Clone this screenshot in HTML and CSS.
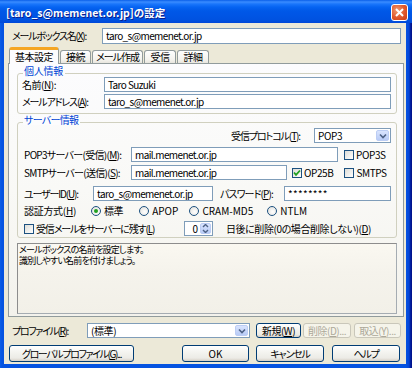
FILE: index.html
```html
<!DOCTYPE html>
<html lang="ja">
<head>
<meta charset="utf-8">
<title>設定</title>
<link rel="stylesheet" href="styles.css">
</head>
<body>
<div class="window">
  <div class="titlebar">
    <span class="title">[taro_s@memenet.or.jp]の設定</span>
    <span class="close"><svg width="15" height="15" viewBox="0 0 15 15"><path d="M4 4 L11 11 M11 4 L4 11" stroke="#fff" stroke-width="2"/></svg></span>
  </div>
  <div class="client">
    <div class="mailbox-row">
      <span class="lbl mailbox-lbl">メールボックス名(<u>X</u>):</span>
      <div class="field mailbox-field">taro_s@memenet.or.jp</div>
    </div>
    <div class="tabs">
      <div class="tab active">基本設定</div>
      <div class="tab t-conn">接続</div>
      <div class="tab t-mail">メール作成</div>
      <div class="tab t-recv">受信</div>
      <div class="tab t-adv">詳細</div>
    </div>
    <div class="panel">
      <div class="group personal">
        <span class="legend lg-personal">個人情報</span>
        <div class="frow"><span class="lbl lbl-personal lbl-name">名前(<u>N</u>):</span><div class="field f-personal">Taro Suzuki</div></div>
        <div class="frow gap2"><span class="lbl lbl-personal lbl-addr">メールアドレス(<u>A</u>):</span><div class="field f-personal">taro_s@memenet.or.jp</div></div>
      </div>
      <div class="group server">
        <span class="legend lg-server">サーバー情報</span>
        <div class="frow proto-row">
          <span class="lbl proto-lbl">受信プロトコル(<u>T</u>):</span>
          <div class="combo proto"><span class="combo-text">POP3</span><span class="drop"><svg width="8" height="6" viewBox="0 0 8 6"><path d="M1 1.5 L4 4.5 L7 1.5" fill="none" stroke="#4d6185" stroke-width="1.6"/></svg></span></div>
        </div>
        <div class="frow r-pop">
          <span class="lbl lbl-server">POP3サーバー(受信)(<u>M</u>):</span>
          <div class="field f-pop">mail.memenet.or.jp</div>
          <span class="check c-pop3s"><span class="box"></span>POP3S</span>
        </div>
        <div class="frow r-smtp">
          <span class="lbl lbl-server">SMTPサーバー(送信)(<u>S</u>):</span>
          <div class="field f-smtp">mail.memenet.or.jp</div>
          <span class="check c-op25b"><span class="box checked"><svg width="8" height="8" viewBox="0 0 8 8"><path d="M1 3.5 L3 5.8 L7 1.5" fill="none" stroke="#21a121" stroke-width="1.8"/></svg></span>OP25B</span>
          <span class="check c-smtps"><span class="box"></span>SMTPS</span>
        </div>
        <div class="frow r-user">
          <span class="lbl lbl-user">ユーザーID(<u>U</u>):</span>
          <div class="field f-user">taro_s@memenet.or.jp</div>
          <span class="lbl lbl-pass">パスワード(<u>P</u>):</span>
          <div class="field f-pass">********</div>
        </div>
        <div class="frow r-auth">
          <span class="lbl lbl-auth">認証方式(<u>H</u>)</span>
          <span class="radio rd-std"><span class="dot on"></span>標準</span>
          <span class="radio rd-apop"><span class="dot"></span>APOP</span>
          <span class="radio rd-cram"><span class="dot"></span>CRAM-MD5</span>
          <span class="radio rd-ntlm"><span class="dot"></span>NTLM</span>
        </div>
        <div class="frow r-keep">
          <span class="check c-keep"><span class="box"></span>受信メールをサーバーに残す(<u>L</u>)</span>
          <div class="spin"><span class="spin-val">0</span><span class="spin-btn"><svg width="9" height="13" viewBox="0 0 9 13"><path d="M2 5 L4.5 2.5 L7 5 M2 8 L4.5 10.5 L7 8" fill="none" stroke="#4d6185" stroke-width="1.4"/></svg></span></div>
          <span class="lbl lbl-days">日後に削除(0の場合削除しない)(<u>D</u>)</span>
        </div>
      </div>
      <div class="desc"><p class="desc-line">メールボックスの名前を設定します。</p><p class="desc-line">識別しやすい名前を付けましょう。</p></div>
    </div>
    <div class="profile-row">
      <span class="lbl lbl-profile">プロファイル(<u>R</u>):</span>
      <div class="combo profile"><span class="combo-text">(標準)</span><span class="drop"><svg width="8" height="6" viewBox="0 0 8 6"><path d="M1 1.5 L4 4.5 L7 1.5" fill="none" stroke="#4d6185" stroke-width="1.6"/></svg></span></div>
      <button class="btn small b-new">新規(<u>W</u>)</button>
      <button class="btn small b-del" disabled>削除(<u>D</u>)...</button>
      <button class="btn small b-imp" disabled>取込(<u>Y</u>)...</button>
    </div>
    <div class="button-row">
      <button class="btn b-global">グローバルプロファイル(<u>G</u>)...</button>
      <button class="btn b-ok">OK</button>
      <button class="btn b-cancel">キャンセル</button>
      <button class="btn b-help">ヘルプ</button>
    </div>
  </div>
</div>
</body>
</html>
```

FILE: styles.css
```css
* { box-sizing: border-box; }
html, body { margin: 0; padding: 0; }
body {
  width: 412px;
  height: 368px;
  overflow: hidden;
  font-family: "Noto Sans CJK JP", sans-serif;
  font-size: 10px;
  line-height: 12px;
  letter-spacing: -0.7px;
  font-feature-settings: "palt";
  color: #000;
  background: #0046d5;
}
u { text-decoration: underline; text-underline-offset: 1px; }

.window {
  width: 412px;
  height: 368px;
  display: flex;
  flex-direction: column;
  background: linear-gradient(to right, #0a5ee8 0, #0553e1 2px, #0553e1 406px, #0446d8 409px, #00138c 411px);
}

.titlebar {
  height: 23px;
  flex: none;
  display: flex;
  align-items: center;
  justify-content: space-between;
  padding: 0 4px 0 6px;
  background: linear-gradient(to bottom, #0a5fe9 0, #3a8cff 2px, #1a76fb 4px, #0664f2 7px, #0058e7 11px, #0055e5 15px, #0052e0 20px, #0048d8 23px);
}
.title {
  color: #fff;
  font-weight: bold;
  font-size: 10.5px;
  letter-spacing: 0;
  text-shadow: 1px 1px 0 #0a1e8c;
  margin-top: 2px;
}
.close {
  width: 17px;
  height: 17px;
  margin-top: 1px;
  border: 1px solid #fff;
  border-radius: 3px;
  background: radial-gradient(circle at 35% 35%, #f09a70 0, #e0572c 55%, #c83c16 100%);
  display: flex;
  align-items: center;
  justify-content: center;
}

.client {
  flex: 1;
  margin: 0 6px 4px 4px;
  background: #ece9d8;
  display: flex;
  flex-direction: column;
}

.lbl { white-space: nowrap; flex: none; }

.field {
  flex: none;
  height: 15px;
  border: 1px solid #7f9db9;
  background: #fff;
  padding-left: 3px;
  line-height: 13px;
  white-space: nowrap;
  overflow: hidden;
  letter-spacing: -0.6px;
}

.mailbox-row {
  display: flex;
  align-items: center;
  margin-top: 5px;
  padding-left: 8px;
}
.mailbox-lbl { width: 90px; letter-spacing: -1.2px; }
.mailbox-field { width: 299px; height: 16px; line-height: 14px; }

.tabs {
  display: flex;
  align-items: flex-end;
  height: 16px;
  margin-top: 3px;
  margin-left: 5px;
  position: relative;
  z-index: 2;
}
.tab {
  height: 13px;
  margin-left: 1px;
  border: 1px solid #919b9c;
  border-bottom: none;
  border-radius: 3px 3px 0 0;
  background: linear-gradient(#fefefe, #f4f3ee 70%, #e8e6de);
  line-height: 12px;
  text-align: center;
  white-space: nowrap;
}
.tab.active {
  width: 50px;
  height: 17px;
  margin-bottom: -1px;
  margin-left: 0;
  border-top: 3px solid #f5a623;
  background: #fcfcfe;
  line-height: 13px;
  letter-spacing: -0.5px;
  position: relative;
}
.t-conn { width: 31px; letter-spacing: -0.4px; }
.t-mail { width: 51px; letter-spacing: -1px; }
.t-recv { width: 32px; letter-spacing: -0.4px; }
.t-adv { width: 32px; letter-spacing: -0.4px; }

.panel {
  width: 396px;
  height: 254px;
  margin-left: 4px;
  border: 1px solid #919b9c;
  background: linear-gradient(#fcfcfe 0, #f9f9f6 50%, #f3f2ec 100%);
  padding: 9px 0 0 8px;
  display: flex;
  flex-direction: column;
}

.group {
  position: relative;
  width: 380px;
  border: 1px solid #d0d0bf;
  border-radius: 3px;
  padding-left: 4px;
}
.legend {
  position: absolute;
  top: -8px;
  left: 5px;
  padding: 0 2px 0 1px;
  color: #0046d5;
  background: #fcfcfd;
  line-height: 10px;
}
.lg-personal { letter-spacing: -0.25px; }
.lg-server { letter-spacing: -0.7px; }
.personal {
  height: 41px;
  padding-top: 3px;
}
.frow {
  display: flex;
  align-items: center;
  height: 15px;
}
.gap2 { margin-top: 2px; }
.lbl-personal { width: 82px; }
.lbl-name { letter-spacing: -0.45px; }
.lbl-addr { letter-spacing: -1.15px; }
.f-personal { width: 287px; }

.server {
  margin-top: 8px;
  height: 116px;
  padding-top: 5px;
  padding-left: 6px;
}
.proto-row { justify-content: flex-end; padding-right: 5px; }
.proto-lbl { margin-right: 14px; letter-spacing: -1.1px; }

.combo {
  flex: none;
  height: 15px;
  border: 1px solid #7f9db9;
  background: #fff;
  display: flex;
  align-items: center;
  justify-content: space-between;
  padding: 1px 1px 1px 3px;
}
.proto { width: 77px; }
.combo-text { line-height: 12px; letter-spacing: -0.4px; }
.drop {
  width: 13px;
  height: 11px;
  border: 1px solid #bccdf4;
  border-radius: 2px;
  background: linear-gradient(#d9e4fe, #b8cbf6);
  display: flex;
  align-items: center;
  justify-content: center;
}

.r-pop { margin-top: 4px; }
.lbl-server { width: 107px; letter-spacing: -0.7px; }
.f-pop { width: 207px; }
.check {
  display: flex;
  align-items: center;
  white-space: nowrap;
  flex: none;
  letter-spacing: -0.4px;
}
.box {
  width: 10px;
  height: 10px;
  border: 1px solid #1c5180;
  background: linear-gradient(135deg, #dcdcd7, #fff);
  margin-right: 2px;
  display: flex;
  align-items: center;
  justify-content: center;
  flex: none;
}
.c-pop3s { margin-left: 6px; }
.r-smtp { margin-top: 3px; }
.f-smtp { width: 156px; }
.c-op25b { margin-left: 5px; }
.c-smtps { margin-left: 11px; }

.r-user { margin-top: 6px; }
.lbl-user { width: 69px; letter-spacing: -1.15px; }
.f-user { width: 120px; }
.lbl-pass { width: 64px; margin-left: 7px; letter-spacing: -0.9px; }
.f-pass { width: 107px; letter-spacing: 0.3px; }

.r-auth { margin-top: 3px; height: 14px; }
.lbl-auth { width: 67px; letter-spacing: -0.3px; }
.radio { display: flex; align-items: center; white-space: nowrap; flex: none; letter-spacing: 0; }
.rd-std { letter-spacing: -0.4px; }
.dot {
  width: 10px;
  height: 10px;
  border-radius: 50%;
  border: 1px solid #1c5180;
  background: radial-gradient(circle at 60% 60%, #fff, #dcdcd7);
  margin-right: 3px;
  display: flex;
  align-items: center;
  justify-content: center;
}
.dot.on::after {
  content: "";
  width: 4px;
  height: 4px;
  border-radius: 50%;
  background: #21a121;
}
.rd-apop { margin-left: 16px; }
.rd-cram { margin-left: 11px; }
.rd-ntlm { margin-left: 14px; }

.r-keep { margin-top: 3px; }
.c-keep { width: 160px; letter-spacing: -1.15px; }
.spin {
  width: 29px;
  height: 15px;
  border: 1px solid #7f9db9;
  background: #fff;
  display: flex;
  align-items: center;
  justify-content: flex-end;
  padding: 1px;
  flex: none;
}
.spin-val { margin-right: 2px; letter-spacing: 0; }
.spin-btn {
  width: 11px;
  height: 11px;
  border: 1px solid #bccdf4;
  border-radius: 2px;
  background: linear-gradient(#d9e4fe, #b8cbf6);
  display: flex;
  align-items: center;
  justify-content: center;
  overflow: hidden;
}
.lbl-days { margin-left: 13px; letter-spacing: -0.42px; }

.desc {
  width: 380px;
  height: 71px;
  margin-top: 5px;
  border: 1px solid #a5acb2;
  border-top-color: #8d8d8d;
  border-left-color: #8d8d8d;
  background: linear-gradient(#faf8f1, #f5f3ec 40%, #f2f0e8);
  padding: 0 1px;
}
.desc-line {
  margin: 0;
  font-size: 9px;
  line-height: 11px;
  height: 11px;
  letter-spacing: -0.75px;
  white-space: nowrap;
}

.profile-row {
  display: flex;
  align-items: center;
  margin-top: 6px;
  padding-left: 8px;
  height: 15px;
}
.lbl-profile { width: 75px; letter-spacing: -1.35px; }
.profile { width: 163px; }

.btn {
  font-family: inherit;
  font-size: 10px;
  line-height: 12px;
  letter-spacing: -0.5px;
  font-feature-settings: "palt";
  color: #000;
  border: 1px solid #003c74;
  border-radius: 3px;
  background: linear-gradient(#fff 0, #f4f4f0 40%, #ecebe6 80%, #d6d0c5 100%);
  padding: 0;
  flex: none;
  white-space: nowrap;
}
.btn:disabled {
  color: #aca899;
  border-color: #c9c7ba;
  background: #f5f4ea;
}
.small { height: 15px; }
.b-new { width: 45px; margin-left: 6px; }
.b-del { width: 48px; margin-left: 2px; }
.b-imp { width: 47px; margin-left: 3px; }

.button-row {
  display: flex;
  align-items: center;
  margin-top: 7px;
  padding-left: 5px;
}
.button-row .btn { height: 17px; }
.b-global { width: 125px; letter-spacing: -1.4px; }
.b-ok { width: 67px; margin-left: 48px; letter-spacing: 0; }
.b-cancel { width: 68px; margin-left: 7px; letter-spacing: -1.2px; }
.b-help { width: 68px; margin-left: 8px; letter-spacing: -1.2px; }
```
